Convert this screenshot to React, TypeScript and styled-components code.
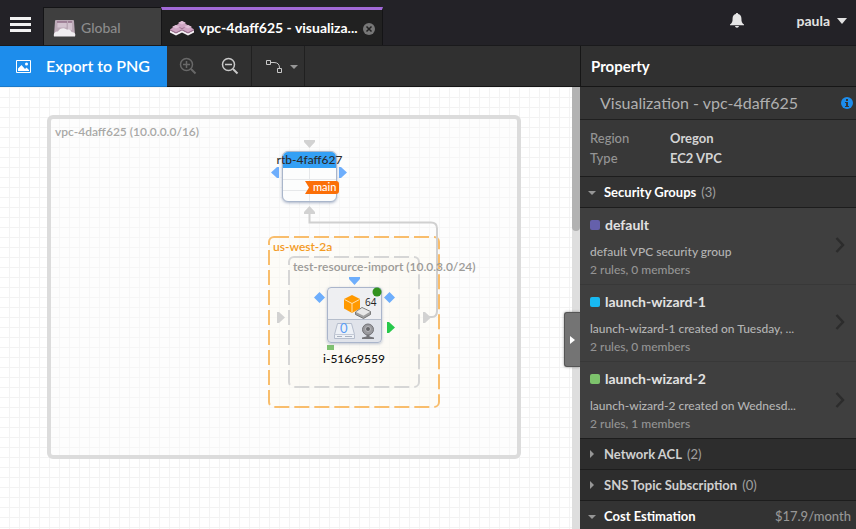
import React from 'react';
import styled, { createGlobalStyle } from 'styled-components';

const GlobalStyle = createGlobalStyle`
  *, *::before, *::after { box-sizing: border-box; }
  html, body, #root { height: 100%; margin: 0; }
  body { background: #fff; overflow: hidden; }
  body, button, input { font-family: Lato, "Liberation Sans", sans-serif; }
  button { border: 0; padding: 0; margin: 0; background: none; color: inherit; cursor: pointer; }
  h1, h2, h3, p, dl, dd, ul { margin: 0; padding: 0; }
  svg { display: block; flex: none; }
`;

const Page = styled.div`
  height: 100vh;
  display: grid;
  grid-template-rows: 46px minmax(0, 1fr);
`;

const Header = styled.header`
  display: flex;
  align-items: stretch;
  background: #232227;
  border-bottom: 1px solid #1a1a1c;
`;

const MenuButton = styled.button`
  width: 43px;
  padding: 4px 2px 0 0;
  display: grid;
  place-items: center;
`;

const Tabs = styled.nav`
  display: flex;
  align-items: flex-end;
  flex: 1;
  min-width: 0;
`;

const Tab = styled.div<{ $active?: boolean }>`
  display: flex;
  align-items: center;
  height: 38px;
  width: ${(p) => (p.$active ? 222 : 118)}px;
  padding: ${(p) => (p.$active ? '0 7px 0 8px' : '2px 8px 0 9px')};
  background: ${(p) => (p.$active ? '#212121' : '#3f3f3f')};
  border: 1px solid #141416;
  border-width: ${(p) => (p.$active ? '3px 1px 0' : '1px 0 0 1px')};
  border-top-color: ${(p) => (p.$active ? '#a269d9' : '#141416')};
`;

const TabLabel = styled.button<{ $active?: boolean }>`
  display: flex;
  align-items: center;
  gap: 5px;
  flex: 1;
  font-size: 14px;
  line-height: 20px;
  white-space: nowrap;
  font-weight: ${(p) => (p.$active ? 700 : 500)};
  color: ${(p) => (p.$active ? '#fff' : '#8c8c8c')};
`;

const CloseButton = styled.button`
  padding-top: 2px;
`;

const HeaderTools = styled.div`
  display: flex;
  align-items: center;
  gap: 52px;
  padding: 0 9px 4px 0;
`;

const UserButton = styled.button`
  display: flex;
  align-items: center;
  gap: 7px;
  color: #e2e2e2;
  font-size: 14px;
  font-weight: 700;
  line-height: 20px;
`;

const Body = styled.div`
  display: grid;
  grid-template-columns: minmax(0, 1fr) 276px;
  min-height: 0;
`;

const Workspace = styled.main`
  display: grid;
  grid-template-rows: 41px minmax(0, 1fr);
  min-width: 0;
`;

const Toolbar = styled.div`
  display: flex;
  background: #303030;
  border-bottom: 1px solid #161616;
`;

const ExportButton = styled.button`
  display: flex;
  align-items: center;
  gap: 15px;
  width: 167px;
  height: 41px;
  padding-left: 16px;
  background: #1d8dec;
  border-bottom: 1px solid #1b7ac9;
  color: #fff;
  font-size: 16px;
  font-weight: 600;
  line-height: 20px;
`;

const ToolGroup = styled.div`
  display: flex;
  border-right: 1px solid #202020;
`;

const ToolButton = styled.button<{ $width: number; $indent?: number }>`
  width: ${(p) => p.$width}px;
  padding-left: ${(p) => p.$indent ?? 0}px;
  display: flex;
  align-items: center;
  justify-content: center;
  gap: 8px;
`;

const Stage = styled.div`
  position: relative;
  overflow: hidden;
  background-color: #fff;
  background-image:
    linear-gradient(to right, transparent 9px, #f3f3f3 9px),
    linear-gradient(to bottom, transparent 9px, #f3f3f3 9px);
  background-size: 10px 10px;
  background-position: 0 1px;
`;

const VpcFrame = styled.section`
  position: absolute;
  left: 47px;
  top: 28px;
  width: 474px;
  height: 344px;
  padding: 4px;
  border: 4px solid #dcdcdc;
  border-radius: 6px;
  background: rgba(250, 250, 250, 0.4);
`;

const CanvasLabel = styled.h2`
  font-size: 12px;
  line-height: 18px;
  font-weight: 600;
  color: #a8a8a6;
  white-space: nowrap;
`;

const FloatLabel = styled(CanvasLabel)<{ $x: number; $y: number; $color: string; $light?: boolean }>`
  position: absolute;
  left: ${(p) => p.$x}px;
  top: ${(p) => p.$y}px;
  color: ${(p) => p.$color};
  font-weight: ${(p) => (p.$light ? 500 : 600)};
`;

const Overlay = styled.svg`
  position: absolute;
  left: 0;
  top: 0;
  overflow: visible;
`;

const RouteTable = styled.div`
  position: absolute;
  left: 282px;
  top: 64px;
  width: 55px;
  height: 51px;
  border: 1px solid #a9b6cb;
  border-radius: 6px;
  background:
    linear-gradient(#e6e8ea, #e6e8ea) 0 27px / 100% 1px no-repeat,
    linear-gradient(#e6e8ea, #e6e8ea) 0 38px / 100% 1px no-repeat,
    linear-gradient(#e6e8ea, #e6e8ea) 26px 0 / 1px 100% no-repeat,
    #fcfdfd;
  box-shadow: 0 1px 3px rgba(90, 110, 150, 0.5);
`;

const RouteTitle = styled.h3`
  display: flex;
  justify-content: center;
  height: 16px;
  border-radius: 5px 5px 0 0;
  background: #34a0f5;
  color: #2b2b2b;
  font-size: 12px;
  line-height: 16px;
  font-weight: 500;
  white-space: nowrap;
`;

const MainTag = styled.span`
  position: absolute;
  left: 22px;
  top: 29px;
  width: 34px;
  height: 13px;
  padding-left: 8px;
  border-radius: 0 3px 3px 0;
  background: #fb6f08;
  clip-path: polygon(0 0, 100% 0, 100% 100%, 0 100%, 4px 50%);
  color: #fff;
  font-size: 11px;
  line-height: 12px;
  font-weight: 500;
`;

const Instance = styled.div`
  position: absolute;
  left: 327px;
  top: 200px;
  width: 55px;
  height: 56px;
  border: 1px solid #aab5cb;
  border-radius: 4px;
  background: linear-gradient(#eeeff2 31px, #b5bdcb 31px, #b5bdcb 32px, #e0e3ea 32px);
  box-shadow: 0 1px 3px rgba(90, 110, 150, 0.4);
`;

const InstanceBits = styled.span`
  position: absolute;
  left: 37px;
  top: 8px;
  font-family: "Open Sans", sans-serif;
  font-size: 10px;
  line-height: 12px;
  color: #222;
`;

const VolumeCount = styled.span`
  position: absolute;
  left: 12px;
  top: 33px;
  font-size: 13px;
  line-height: 15px;
  color: #5a9df5;
`;

const ScrollTrack = styled.div`
  position: absolute;
  right: 0;
  top: 0;
  bottom: 0;
  width: 8px;
  background: #dedede;
`;

const ScrollThumb = styled.div`
  height: 144px;
  background: #b2b2b2;
  border-radius: 0 0 4px 4px;
`;

const PanelHandle = styled.button`
  position: absolute;
  right: 0;
  top: 225px;
  width: 16px;
  height: 55px;
  display: grid;
  place-items: center;
  background: #747474;
  border: 1px solid #555;
  border-right: 0;
  border-radius: 3px 0 0 3px;
  box-shadow: 0 0 3px rgba(0, 0, 0, 0.4);
`;

const Panel = styled.aside`
  display: flex;
  flex-direction: column;
  overflow: hidden;
  background: #363636;
`;

const PanelHeading = styled.h1`
  height: 41px;
  flex: none;
  padding: 0 10px;
  border-left: 1px solid #161616;
  border-bottom: 1px solid #161616;
  background: #303030;
  color: #fff;
  font-size: 15px;
  font-weight: 700;
  line-height: 41px;
`;

const PanelTitle = styled.div`
  display: flex;
  align-items: center;
  justify-content: space-between;
  height: 33px;
  flex: none;
  padding: 0 3px 0 20px;
  border-bottom: 1px solid #202020;
  background: #353535;
  color: #b0b0b0;
  font-size: 16px;
  font-weight: 400;
  line-height: 20px;
`;

const InfoButton = styled.button`
  width: 12px;
  height: 12px;
`;

const Facts = styled.dl`
  display: grid;
  grid-template-columns: 80px 1fr;
  grid-auto-rows: 20px;
  flex: none;
  height: 57px;
  padding: 8px 10px;
  border-bottom: 1px solid #1d1d1d;
  background: #383838;
  font-size: 13px;
  font-weight: 500;
  line-height: 20px;
  color: #949494;

  dd { color: #d4d4d4; font-weight: 700; }
`;

const SectionBar = styled.button<{ $open?: boolean }>`
  display: flex;
  align-items: center;
  height: 31px;
  flex: none;
  width: 100%;
  padding: 0 5px 0 8px;
  border-bottom: 1px solid #1d1d1d;
  background: ${(p) => (p.$open ? '#333' : '#2d2d2d')};
  color: ${(p) => (p.$open ? '#fff' : '#d0d0d0')};
  font-size: 13px;
  font-weight: 700;
  line-height: 20px;
  text-align: left;
`;

const SectionName = styled.span`
  margin-left: 8px;
`;

const SectionCount = styled.span`
  margin-left: 5px;
  color: #a0a0a0;
  font-weight: 400;
`;

const SectionValue = styled.span`
  margin-left: auto;
  color: #969696;
  font-weight: 500;
`;

const GroupList = styled.ul`
  flex: none;
  list-style: none;
  background: #3f3f3f;
  border-bottom: 1px solid #1d1d1d;
`;

const GroupRow = styled.button`
  display: flex;
  align-items: center;
  justify-content: space-between;
  width: 100%;
  height: 77px;
  padding: 0 11px 2px 10px;
  text-align: left;
  border-bottom: 1px solid #383838;

  li:last-child > & { height: 76px; border-bottom: 0; padding-bottom: 1px; }
`;

const GroupText = styled.span`
  display: flex;
  flex-direction: column;
  min-width: 0;
  padding-top: 4px;
`;

const GroupName = styled.span`
  display: flex;
  align-items: center;
  gap: 5px;
  margin-bottom: 9px;
  color: #e2e2e2;
  font-size: 14px;
  font-weight: 700;
  line-height: 18px;
`;

const Swatch = styled.i<{ $color: string }>`
  width: 10px;
  height: 10px;
  border-radius: 2px;
  background: ${(p) => p.$color};
`;

const GroupLine = styled.span<{ $dim?: boolean }>`
  font-size: 12px;
  font-weight: 500;
  line-height: 18px;
  color: ${(p) => (p.$dim ? '#949494' : '#b4b4b4')};
  white-space: nowrap;
`;

const GROUPS = [
  { name: 'default', color: '#6560ab', text: 'default VPC security group', info: '2 rules, 0 members' },
  { name: 'launch-wizard-1', color: '#18b9f2', text: 'launch-wizard-1 created on Tuesday, ...', info: '2 rules, 0 members' },
  { name: 'launch-wizard-2', color: '#7dc36c', text: 'launch-wizard-2 created on Wednesd...', info: '2 rules, 1 members' },
];

const Triangle = ({ open }: { open?: boolean }) => (
  <svg width="8" height="8" viewBox="0 0 8 8" fill="#969696">
    <path d={open ? 'M0 3h8L4 7z' : 'M2 0v8l4-4z'} />
  </svg>
);

const GlobalIcon = () => (
  <svg width="23" height="18" viewBox="0 0 23 18">
    <path d="M3 1h17a1 1 0 0 1 1 1l1 14H1L2 2a1 1 0 0 1 1-1z" fill="#bba9b6" />
    <path d="M4.500 3h9v5.500h-9zM15 3h4v8h-4z" fill="#d3c3cf" />
    <path d="M4 3h10M15 3h4" stroke="#94728a" strokeWidth="1.600" />
    <path d="M1 17.500c-.8-3 1-5 4-5 1.500-3.500 6-4.500 9-1.800 2.500-.6 4 .3 4.500 2.300 3.500.3 4.500 2 3.500 4.500z" fill="#f1eef1" />
  </svg>
);

const Block = ({ x, y }: { x: number; y: number }) => (
  <g transform={`translate(${x} ${y})`}>
    <path d="M0 5v2.500L6 10.500l6-3V5L6 8z" fill="#f6f1f5" />
    <path d="M0 4.500L6 1.500l6 3V5.500l-6 3-6-3z" fill="#9a6f8d" />
    <path d="M0 4.300L2.500 3V1.800L6 0l3.500 1.800V3L12 4.300 6 7.300z" fill="#cfa5c3" />
    <path d="M2.500 1.800L6 0l3.500 1.800L6 3.600z" fill="#e0c0d7" />
  </g>
);

const StackIcon = () => (
  <svg width="24" height="16" viewBox="0 0 24 16">
    <Block x={6} y={1} />
    <Block x={0} y={5} />
    <Block x={12} y={5} />
  </svg>
);

const Magnifier = ({ color, plus }: { color: string; plus?: boolean }) => (
  <svg width="18" height="18" viewBox="0 0 18 18" fill="none" stroke={color}>
    <circle cx="7.500" cy="7.500" r="6" strokeWidth="1.500" />
    <path d={plus ? 'M4 7.500h7M7.500 4v7' : 'M4 7.500h7'} strokeWidth="1.500" />
    <path d="M12 12l4.500 4.500" strokeWidth="2" />
  </svg>
);

const Diagram = () => (
  <Overlay width="580" height="442" viewBox="0 87 580 442" aria-hidden="true">
    <rect x="269" y="237" width="170" height="170" rx="5" fill="#fdf8ef" fillOpacity=".35" stroke="#f8bd6c" strokeWidth="2" strokeDasharray="15 5" />
    <rect x="289" y="257" width="130" height="130" rx="5" fill="#f8f6f2" fillOpacity=".35" stroke="#d6d6d6" strokeWidth="2" strokeDasharray="15 5" />
    <path d="M309.500 213v9.500H431q6 0 6 6V311q0 6-5 6h-3" fill="none" stroke="#d0d0d0" strokeWidth="2" />
    <g fill="#d2d2d2">
      <path d="M304 140h11v2l-5.500 6-5.500-6z" />
      <path d="M304 214v-2l5.500-6 5.500 6v2z" />
      <path d="M277 312h2l6 5.500-6 5.500h-2z" />
      <path d="M423 312h2l6 5.500-6 5.500h-2z" />
    </g>
    <g fill="#6eaefc">
      <path d="M279 167v11h-2l-6-5.500 6-5.500z" />
      <path d="M339 167v11h2l6-5.500-6-5.500z" />
      <path d="M349 277h11v2l-5.500 6-5.500-6z" />
      <path d="M319.500 292l5.500 5.500-5.500 5.500-5.500-5.500zM389.500 292l5.500 5.500-5.500 5.500-5.500-5.500z" />
    </g>
    <path d="M387 322h2l6 5.500-6 5.500h-2z" fill="#27c84b" />
    <rect x="327" y="345" width="7" height="5" fill="#7fc270" />
  </Overlay>
);

const InstanceArt = () => (
  <Overlay width="54" height="54" viewBox="328 288 54 54" aria-hidden="true">
    <path d="M352 295l8 4v9.500l-8 4.500-8-4.500V299z" fill="#f90" />
    <path d="M344.500 299.500l7.500 4 7.500-4M352 303.500v9" fill="none" stroke="#ffe2b0" />
    <path d="M355.500 312l6.500-4.500 8.500 4v3l-7 4-8-4z" fill="#a0a0a0" stroke="#666" strokeWidth=".8" />
    <path d="M356 312l6-4 8 3.700-6.500 4z" fill="#e8e8e8" />
    <path d="M337.500 323.500h14l3 11v4h-20v-4z" fill="#eef1f6" stroke="#b5bdcc" />
    <path d="M334.500 334.500h20" stroke="#c4cad6" />
    <path d="M337 336.500h5M345 336.500h7" stroke="#aab2c0" />
    <circle cx="368" cy="329.500" r="5.500" fill="#9a9a9e" stroke="#747478" />
    <circle cx="368" cy="329" r="2.500" fill="#66666a" stroke="#bcbcbf" />
    <path d="M366.500 335h3v1.500l4.500 1v1.500h-12v-1.500l4.500-1z" fill="#747478" />
    <circle cx="377" cy="292" r="4.500" fill="#31921f" />
  </Overlay>
);

export default function App() {
  return (
    <Page>
      <GlobalStyle />
      <Header>
        <MenuButton aria-label="Menu">
          <svg width="21" height="16" viewBox="0 0 21 16" fill="#f2f2f2">
            <path d="M0 0h21v3H0zM0 6h21v3H0zM0 12h21v3H0z" />
          </svg>
        </MenuButton>
        <Tabs aria-label="Workspaces">
          <Tab>
            <TabLabel><GlobalIcon />Global</TabLabel>
          </Tab>
          <Tab $active>
            <TabLabel $active><StackIcon />vpc-4daff625 - visualiza...</TabLabel>
            <CloseButton aria-label="Close tab">
              <svg width="12" height="12" viewBox="0 0 12 12">
                <circle cx="6" cy="6" r="6" fill="#777" />
                <path d="M3.500 3.500l5 5M8.500 3.500l-5 5" stroke="#212121" strokeWidth="1.500" />
              </svg>
            </CloseButton>
          </Tab>
        </Tabs>
        <HeaderTools>
          <button aria-label="Notifications">
            <svg width="14" height="15" viewBox="0 0 14 15" fill="#e6e6e6">
              <path d="M7 0c.8 0 1.200.5 1.200 1.100 2 .5 3.200 2 3.200 4.200 0 3.700.6 5.200 2.600 6.200v.8H0v-.8c2-1 2.600-2.500 2.600-6.200 0-2.200 1.200-3.700 3.200-4.200C5.800.5 6.200 0 7 0zM5 13h4c-.3 1.200-1 1.700-2 1.700S5.300 14.200 5 13z" />
            </svg>
          </button>
          <UserButton>
            paula
            <svg width="10" height="7" viewBox="0 0 10 7" fill="#e2e2e2"><path d="M0 1h10L5 7z" /></svg>
          </UserButton>
        </HeaderTools>
      </Header>
      <Body>
        <Workspace>
          <Toolbar>
            <ExportButton>
              <svg width="15" height="13" viewBox="0 0 15 13">
                <path d="M.5.5h14v12H.5z" fill="none" stroke="#fff" />
                <path d="M2 11V8.500L5.500 5 9 9l1.500-1.500L13 10v1z" fill="#fff" />
                <circle cx="10.500" cy="4" r="1.500" fill="#fff" />
              </svg>
              Export to PNG
            </ExportButton>
            <ToolGroup>
              <ToolButton $width={41} aria-label="Zoom in"><Magnifier color="#686868" plus /></ToolButton>
              <ToolButton $width={43} aria-label="Zoom out"><Magnifier color="#c8c8c8" /></ToolButton>
            </ToolGroup>
            <ToolGroup>
              <ToolButton $width={52} $indent={8} aria-label="Line style">
                <svg width="16" height="13" viewBox="0 0 16 13" fill="none" stroke="#c8c8c8">
                  <path d="M.5.500h4v4h-4zM11.500 8.500h4v4h-4z" />
                  <path d="M5 2.500h3q5.500 0 5.500 5.500" />
                </svg>
                <svg width="8" height="5" viewBox="0 0 8 5" fill="#969696"><path d="M0 1h8L4 5z" /></svg>
              </ToolButton>
            </ToolGroup>
          </Toolbar>
          <Stage>
            <VpcFrame><CanvasLabel>vpc-4daff625 (10.0.0.0/16)</CanvasLabel></VpcFrame>
            <Diagram />
            <FloatLabel $x={273} $y={151} $color="#f39a1f">us-west-2a</FloatLabel>
            <FloatLabel $x={293} $y={171} $color="#9c9b98">test-resource-import (10.0.3.0/24)</FloatLabel>
            <RouteTable>
              <RouteTitle>rtb-4faff627</RouteTitle>
              <MainTag>main</MainTag>
            </RouteTable>
            <Instance>
              <InstanceArt />
              <InstanceBits>64</InstanceBits>
              <VolumeCount>0</VolumeCount>
            </Instance>
            <FloatLabel $x={323} $y={263} $color="#111" $light>i-516c9559</FloatLabel>
            <ScrollTrack><ScrollThumb /></ScrollTrack>
            <PanelHandle aria-label="Collapse panel">
              <svg width="5" height="8" viewBox="0 0 5 8" fill="#fff"><path d="M0 0v8l5-4z" /></svg>
            </PanelHandle>
          </Stage>
        </Workspace>
        <Panel>
          <PanelHeading>Property</PanelHeading>
          <PanelTitle>
            Visualization - vpc-4daff625
            <InfoButton aria-label="Information">
              <svg width="12" height="12" viewBox="0 0 12 12">
                <circle cx="6" cy="6" r="6" fill="#1d8dec" />
                <path d="M5 2h2v2H5zM4 5h3v4h1v1H4V9h1V6H4z" fill="#353535" />
              </svg>
            </InfoButton>
          </PanelTitle>
          <Facts>
            <dt>Region</dt><dd>Oregon</dd>
            <dt>Type</dt><dd>EC2 VPC</dd>
          </Facts>
          <SectionBar $open>
            <Triangle open /><SectionName>Security Groups</SectionName><SectionCount>(3)</SectionCount>
          </SectionBar>
          <GroupList>
            {GROUPS.map((g) => (
              <li key={g.name}>
                <GroupRow>
                  <GroupText>
                    <GroupName><Swatch $color={g.color} />{g.name}</GroupName>
                    <GroupLine>{g.text}</GroupLine>
                    <GroupLine $dim>{g.info}</GroupLine>
                  </GroupText>
                  <svg width="10" height="16" viewBox="0 0 10 16" fill="none" stroke="#2c2c2c" strokeWidth="2.500">
                    <path d="M1.500 1l6.500 7-6.500 7" />
                  </svg>
                </GroupRow>
              </li>
            ))}
          </GroupList>
          <SectionBar>
            <Triangle /><SectionName>Network ACL</SectionName><SectionCount>(2)</SectionCount>
          </SectionBar>
          <SectionBar>
            <Triangle /><SectionName>SNS Topic Subscription</SectionName><SectionCount>(0)</SectionCount>
          </SectionBar>
          <SectionBar $open>
            <Triangle open /><SectionName>Cost Estimation</SectionName><SectionValue>$17.9/month</SectionValue>
          </SectionBar>
        </Panel>
      </Body>
    </Page>
  );
}
